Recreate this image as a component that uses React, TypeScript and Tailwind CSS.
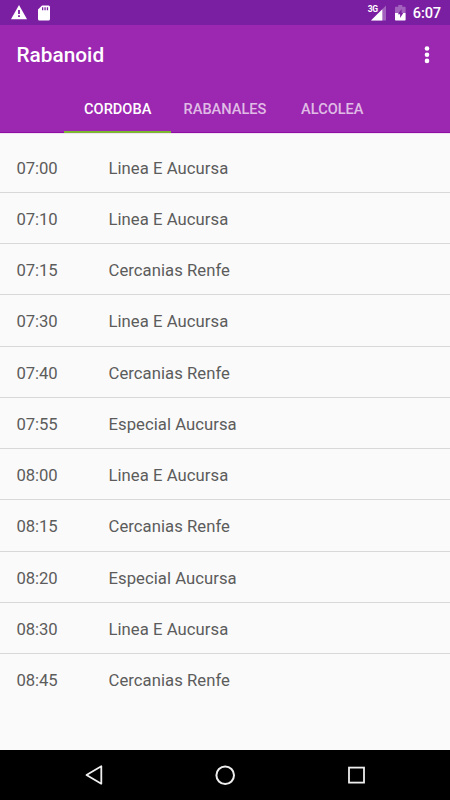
interface Departure {
  time: string;
  line: string;
}

const departures: Departure[] = [
  { time: '07:00', line: 'Linea E Aucursa' },
  { time: '07:10', line: 'Linea E Aucursa' },
  { time: '07:15', line: 'Cercanias Renfe' },
  { time: '07:30', line: 'Linea E Aucursa' },
  { time: '07:40', line: 'Cercanias Renfe' },
  { time: '07:55', line: 'Especial Aucursa' },
  { time: '08:00', line: 'Linea E Aucursa' },
  { time: '08:15', line: 'Cercanias Renfe' },
  { time: '08:20', line: 'Especial Aucursa' },
  { time: '08:30', line: 'Linea E Aucursa' },
  { time: '08:45', line: 'Cercanias Renfe' },
];

const tabs = ['CORDOBA', 'RABANALES', 'ALCOLEA'];

function StatusBar() {
  return (
    <div className="flex h-[25px] items-center bg-[#7b1fa2] pl-[11px] pr-[9px] text-white">
      <svg width="16" height="15" viewBox="0 0 16 15">
        <path d="M8 0L16 14.3H0Z" fill="#fff" />
        <path d="M7.1 5h1.8v4H7.1zM7.1 10.3h1.8v1.8H7.1z" fill="#7b1fa2" />
      </svg>
      <svg className="ml-[10px]" width="14" height="16" viewBox="0 0 14 16">
        <path d="M5 .5h6.5a1.5 1.5 0 0 1 1.5 1.5v12a1.5 1.5 0 0 1-1.5 1.5h-9A1.5 1.5 0 0 1 1 14V4.5Z" fill="#fff" />
        <path d="M5 2.3h1.3v2.9H5zM7.4 2.3h1.3v2.9H7.4zM9.8 2.3h1.3v2.9H9.8z" fill="#7b1fa2" />
      </svg>
      <div className="ml-auto flex items-center">
        <div className="relative h-[16px] w-[19px]">
          <svg width="19" height="16" viewBox="0 0 19 16">
            <path d="M19 .5V15.5H4Z" fill="#fff" fillOpacity=".3" />
            <path d="M15.3 4.2V15.5H4Z" fill="#fff" />
          </svg>
          <span className="absolute left-[1px] top-0 text-[8.5px] font-bold leading-[9px] tracking-[-0.4px]">3G</span>
        </div>
        <svg className="ml-[9px]" width="11" height="16" viewBox="0 0 11 16">
          <path d="M3.3 0h4v1.7h2.6q.7 0 .7.7V8H0V2.4q0-.7.7-.7h2.6Z" fill="#fff" fillOpacity=".3" />
          <path d="M0 8h10.6v6.8q0 .7-.7.7H.7q-.7 0-.7-.7Z" fill="#fff" />
          <path d="M6.6 4L2.8 9.3h2.3V13l3.2-5H6.6Z" fill="#7b1fa2" />
        </svg>
        <span className="ml-[7px] pt-[1px] text-[14.6px] font-medium leading-[24px] tracking-[-0.15px]">6:07</span>
      </div>
    </div>
  );
}

function Header() {
  return (
    <header className="h-[108px] bg-[#9c27b0] text-white shadow-[0_1px_0_#efe3f2]">
      <div className="flex h-[59px] items-center justify-between pl-[16.5px] pr-[20px]">
        <h1 className="pt-[2px] text-[20.8px] font-medium">Rabanoid</h1>
        <svg width="6" height="18" viewBox="0 0 6 18" fill="#fff">
          <circle cx="3" cy="2.5" r="2.3" />
          <circle cx="3" cy="8.7" r="2.3" />
          <circle cx="3" cy="14.9" r="2.3" />
        </svg>
      </div>
      <nav className="flex h-[49px] justify-center text-center text-[14.6px] font-medium leading-[50px] shadow-[inset_0_-1px_0_#8e0da4]">
        {tabs.map((tab, i) => (
          <div key={tab} className={i === 0 ? 'w-[107.3px] border-b-2 border-[#7cb82f]' : 'w-[107.3px] text-white/70'}>
            {tab}
          </div>
        ))}
      </nav>
    </header>
  );
}

function NavigationBar() {
  return (
    <div className="flex h-[50px] items-center justify-between bg-black pl-[84px] pr-[84px]">
      <svg width="20" height="22" viewBox="0 0 20 22" fill="none" stroke="#eee" strokeWidth="1.8">
        <path d="M17.3 2.3V19.7L2.5 11Z" strokeLinejoin="round" />
      </svg>
      <svg width="22" height="22" viewBox="0 0 22 22" fill="none" stroke="#eee" strokeWidth="2">
        <circle cx="11.2" cy="11.2" r="8.8" />
      </svg>
      <svg width="20" height="22" viewBox="0 0 20 22" fill="none" stroke="#eee" strokeWidth="1.8">
        <rect x="3" y="3.6" width="15" height="15" />
      </svg>
    </div>
  );
}

export default function App() {
  return (
    <div className="flex h-[800px] w-[450px] flex-col overflow-hidden bg-[#fafafa] font-['Roboto',sans-serif]">
      <StatusBar />
      <Header />
      <ul className="flex-1 pt-[8.6px] text-[16.67px] text-[#5c5c5c]">
        {departures.map(({ time, line }) => (
          <li key={time} className="flex h-[51.25px] items-center border-b border-[#d8d8d8] pl-[16.5px] pt-[2.6px] last:border-transparent">
            <span className="w-[92px] tracking-[-0.1px]">{time}</span>
            <span className="tracking-[0.05px]">{line}</span>
          </li>
        ))}
      </ul>
      <NavigationBar />
    </div>
  );
}
